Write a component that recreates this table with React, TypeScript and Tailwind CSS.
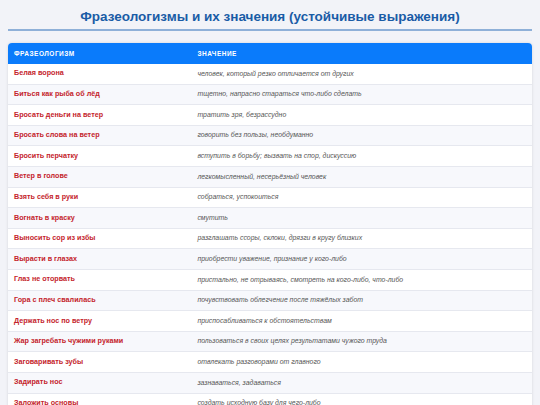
const rows: [string, string][] = [
  ["Белая ворона", "человек, который резко отличается от других"],
  ["Биться как рыба об лёд", "тщетно, напрасно стараться что-либо сделать"],
  ["Бросать деньги на ветер", "тратить зря, безрассудно"],
  ["Бросать слова на ветер", "говорить без пользы, необдуманно"],
  ["Бросить перчатку", "вступить в борьбу; вызвать на спор, дискуссию"],
  ["Ветер в голове", "легкомысленный, несерьёзный человек"],
  ["Взять себя в руки", "собраться, успокоиться"],
  ["Вогнать в краску", "смутить"],
  ["Выносить сор из избы", "разглашать ссоры, склоки, дрязги в кругу близких"],
  ["Вырасти в глазах", "приобрести уважение, признание у кого-либо"],
  ["Глаз не оторвать", "пристально, не отрываясь, смотреть на кого-либо, что-либо"],
  ["Гора с плеч свалилась", "почувствовать облегчение после тяжёлых забот"],
  ["Держать нос по ветру", "приспосабливаться к обстоятельствам"],
  ["Жар загребать чужими руками", "пользоваться в своих целях результатами чужого труда"],
  ["Заговаривать зубы", "отвлекать разговорами от главного"],
  ["Задирать нос", "зазнаваться, задаваться"],
  ["Заложить основы", "создать исходную базу для чего-либо"],
];

export default function App() {
  return (
    <div className="min-h-screen bg-[#f2f3f8] px-2 pt-[8px] font-['Liberation_Sans',Arial,sans-serif]">
      <h1 className="border-b-2 border-[#8fb0d8] pb-[4px] text-center text-[13.5px] font-bold leading-[17px] text-[#1a5ca6]">
        Фразеологизмы и их значения (устойчивые выражения)
      </h1>

      <div className="mt-[12px] overflow-hidden rounded-t-[4px] bg-white shadow-[0_0_3px_rgba(0,0,0,0.12)]">
        <div className="flex h-[21px] items-center bg-[#0a7bfb] text-[6.5px] font-bold uppercase tracking-[0.5px] text-white">
          <div className="w-[35%] pl-[6px]">Фразеологизм</div>
          <div className="flex-1 pl-[6px]">Значение</div>
        </div>
        {rows.map(([phrase, meaning], i) => (
          <div
            key={phrase}
            className={`flex h-[20.6px] items-center border-b border-[#e6e8ef] ${
              i % 2 === 1 ? "bg-[#f7f8fc]" : "bg-white"
            }`}
          >
            <div className="w-[35%] pl-[6px] text-[7.2px] font-bold text-[#c4232b]">{phrase}</div>
            <div className="flex-1 pl-[6px] text-[6.9px] italic text-[#555]">{meaning}</div>
          </div>
        ))}
      </div>
    </div>
  );
}
